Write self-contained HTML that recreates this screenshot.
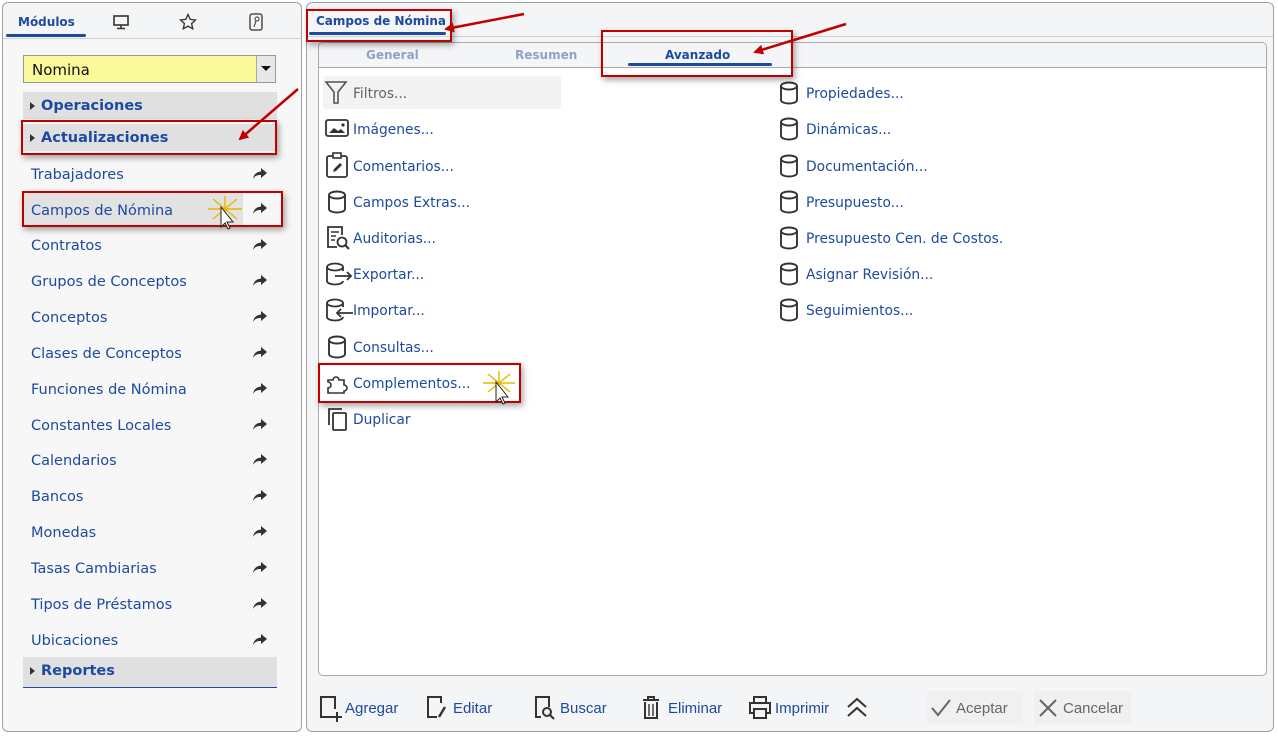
<!DOCTYPE html>
<html><head><meta charset="utf-8"><style>
*{box-sizing:border-box;margin:0;padding:0}
body{width:1278px;height:736px;background:#fff;position:relative;overflow:hidden;font-family:"DejaVu Sans","Liberation Sans",sans-serif;color:#1d4aa0}
.a{position:absolute}
.lp{left:2px;top:2px;width:300px;height:730px;border:1px solid #a0a0a0;border-radius:6px;background:#f7f7f7}
.rp{left:306px;top:2px;width:968px;height:730px;border:1px solid #a0a0a0;border-radius:6px;background:#f4f5f7}
.li{left:31px;font-size:14.5px;white-space:nowrap;margin-top:2px}
.sh{left:23px;width:254px;background:#e0e0e0;font-weight:bold;font-size:14.5px;padding-left:18px;line-height:29px;height:27px}
.sh:before{content:"";position:absolute;left:7px;top:10px;border-left:5px solid #333;border-top:4px solid transparent;border-bottom:4px solid transparent}
.ar{left:252px;width:16px;height:14px}
.it{font-size:13.8px;white-space:nowrap;margin-top:2px}
.ic{width:20px;height:24px}
.tb{font-family:"Liberation Sans",sans-serif;font-size:15px;top:700px;white-space:nowrap}
</style></head><body>
<svg width="0" height="0" style="position:absolute"><defs>
<symbol id="cyl" viewBox="0 0 20 24"><g fill="none" stroke="#333" stroke-width="1.9"><ellipse cx="10" cy="5" rx="8" ry="3.5"/><path d="M2 5v14c0 2 3.6 3.5 8 3.5s8-1.5 8-3.5V5"/></g></symbol>
<symbol id="fwd" viewBox="0 0 16 14"><path d="M9 1l6 5-6 5V8C5 8 2.5 9 1 12c0.5-4 3-7 8-7.5z" fill="#333"/></symbol>
</defs></svg>

<div class="a lp">
 <div class="a" style="left:0;top:0;width:298px;height:36px;border-bottom:1px solid #d0d0d0;background:#f4f5f7;border-radius:6px 6px 0 0"></div>
 <div class="a" style="left:15px;top:12px;font-size:12px;font-weight:bold">Módulos</div>
 <div class="a" style="left:3px;top:31px;width:80px;height:3px;background:#1d4aa0;border-radius:2px"></div>
 <svg class="a" style="left:110px;top:12px" width="16" height="15"><rect x="1" y="1" width="14" height="9" fill="none" stroke="#333" stroke-width="1.6"/><path d="M8 10v3M4 13.5h8" stroke="#333" stroke-width="1.6"/></svg>
 <svg class="a" style="left:176px;top:10px" width="18" height="18" viewBox="0 0 24 24"><path d="M12 2l3 6.5 7 .8-5.2 4.8 1.5 7L12 17.5 5.7 21l1.5-7L2 9.3l7-.8z" fill="none" stroke="#333" stroke-width="1.8"/></svg>
 <svg class="a" style="left:246px;top:10px" width="14" height="18"><rect x="1" y="1" width="12" height="16" rx="2" fill="none" stroke="#333" stroke-width="1.3"/><circle cx="8" cy="6" r="2" fill="none" stroke="#333"/><path d="M7 8l-2 6" stroke="#333"/></svg>
</div>
<div class="a" style="left:23px;top:55px;width:253px;height:28px;background:#fafa9a;border:1px solid #999;font-size:15px;padding:5px 0 0 8px;color:#111">Nomina</div>
<div class="a" style="left:256px;top:56px;width:19px;height:26px;background:#e8e8e8;border-left:1px solid #aaa"></div>
<div class="a" style="left:261px;top:66px;border-top:5px solid #111;border-left:5px solid transparent;border-right:5px solid transparent"></div>

<div class="a sh" style="top:92px">Operaciones</div>
<div class="a sh" style="top:124px">Actualizaciones</div>
<div class="a" style="left:23px;top:193px;width:220px;height:32px;background:#e2e2e2"></div>
<div class="a li" style="top:165px">Trabajadores</div>
<div class="a li" style="top:201px">Campos de Nómina</div>
<div class="a li" style="top:236px">Contratos</div>
<div class="a li" style="top:272px">Grupos de Conceptos</div>
<div class="a li" style="top:308px">Conceptos</div>
<div class="a li" style="top:344px">Clases de Conceptos</div>
<div class="a li" style="top:380px">Funciones de Nómina</div>
<div class="a li" style="top:416px">Constantes Locales</div>
<div class="a li" style="top:451px">Calendarios</div>
<div class="a li" style="top:487px">Bancos</div>
<div class="a li" style="top:523px">Monedas</div>
<div class="a li" style="top:559px">Tasas Cambiarias</div>
<div class="a li" style="top:595px">Tipos de Préstamos</div>
<div class="a li" style="top:631px">Ubicaciones</div>
<svg class="a ar" style="top:167px"><use href="#fwd"/></svg>
<svg class="a ar" style="top:202px"><use href="#fwd"/></svg>
<svg class="a ar" style="top:238px"><use href="#fwd"/></svg>
<svg class="a ar" style="top:274px"><use href="#fwd"/></svg>
<svg class="a ar" style="top:310px"><use href="#fwd"/></svg>
<svg class="a ar" style="top:346px"><use href="#fwd"/></svg>
<svg class="a ar" style="top:382px"><use href="#fwd"/></svg>
<svg class="a ar" style="top:418px"><use href="#fwd"/></svg>
<svg class="a ar" style="top:453px"><use href="#fwd"/></svg>
<svg class="a ar" style="top:489px"><use href="#fwd"/></svg>
<svg class="a ar" style="top:525px"><use href="#fwd"/></svg>
<svg class="a ar" style="top:561px"><use href="#fwd"/></svg>
<svg class="a ar" style="top:597px"><use href="#fwd"/></svg>
<svg class="a ar" style="top:633px"><use href="#fwd"/></svg>
<div class="a sh" style="top:657px;height:31px;border-bottom:1.5px solid #1d4aa0">Reportes</div>

<div class="a rp"></div>
<div class="a" style="left:307px;top:36px;width:966px;height:1px;background:#d0d0d0"></div>
<div class="a" style="left:316px;top:14px;font-size:12px;font-weight:bold">Campos de Nómina</div>
<div class="a" style="left:309px;top:32px;width:137px;height:3px;background:#1d4aa0;border-radius:2px"></div>
<div class="a" style="left:318px;top:42px;width:949px;height:634px;border:1px solid #aaa;border-radius:5px;background:#fff"></div>
<div class="a" style="left:319px;top:43px;width:947px;height:25px;background:#f4f5f7;border-bottom:1px solid #aaa;border-radius:5px 5px 0 0"></div>
<div class="a" style="left:366px;top:48px;font-size:12px;font-weight:bold;color:#8fa3c8">General</div>
<div class="a" style="left:515px;top:48px;font-size:12px;font-weight:bold;color:#8fa3c8">Resumen</div>
<div class="a" style="left:665px;top:48px;font-size:12px;font-weight:bold">Avanzado</div>
<div class="a" style="left:628px;top:63px;width:144px;height:3px;background:#1d4aa0;border-radius:2px"></div>

<div class="a" style="left:323px;top:76px;width:238px;height:33px;background:#f3f3f3;border-radius:3px"></div>
<svg class="a" style="left:324px;top:80px" width="24" height="26"><path d="M2 2h20l-8 10v11h-4V12z" fill="none" stroke="#555" stroke-width="1.6"/></svg>
<div class="a it" style="left:353px;top:84px;color:#666">Filtros...</div>
<svg class="a" style="left:325px;top:119px" width="24" height="20"><rect x="1" y="1" width="22" height="16" rx="2" fill="none" stroke="#333" stroke-width="1.8"/><path d="M4 14l5-5 4 3 3-2 4 4z" fill="#333"/><circle cx="18" cy="6" r="1.6" fill="#333"/></svg>
<div class="a it" style="left:353px;top:120px">Imágenes...</div>
<svg class="a" style="left:326px;top:152px" width="22" height="26"><rect x="1" y="4" width="20" height="21" rx="2" fill="none" stroke="#333" stroke-width="1.8"/><rect x="7" y="1" width="8" height="5" fill="#fff" stroke="#333" stroke-width="1.6"/><path d="M7 20l1-3 6-6 2 2-6 6z" fill="#333"/></svg>
<div class="a it" style="left:353px;top:157px">Comentarios...</div>
<svg class="a ic" style="left:327px;top:190px"><use href="#cyl"/></svg>
<div class="a it" style="left:353px;top:193px">Campos Extras...</div>
<svg class="a" style="left:325px;top:225px" width="26" height="26"><path d="M12 22H3V2h14v8" fill="none" stroke="#333" stroke-width="1.8"/><path d="M6 7h8M6 11h5M6 15h4" stroke="#333" stroke-width="1.5"/><circle cx="17" cy="17" r="4.5" fill="none" stroke="#333" stroke-width="1.8"/><path d="M20 20l4 4" stroke="#333" stroke-width="2"/></svg>
<div class="a it" style="left:353px;top:229px">Auditorias...</div>
<svg class="a" style="left:325px;top:262px" width="28" height="25"><g fill="none" stroke="#333" stroke-width="1.8"><ellipse cx="10" cy="5" rx="8" ry="3.5"/><path d="M2 5v14c0 2 3.5 3.5 8 3.5s8-1.5 8-3.5M18 5v4"/><path d="M10 14h16M22 10l4 4-4 4"/></g></svg>
<div class="a it" style="left:353px;top:265px">Exportar...</div>
<svg class="a" style="left:325px;top:298px" width="28" height="25"><g fill="none" stroke="#333" stroke-width="1.8"><ellipse cx="10" cy="5" rx="8" ry="3.5"/><path d="M2 5v14c0 2 3.5 3.5 8 3.5s8-1.5 8-3.5M18 5v4"/><path d="M12 15h16M16 11l-4 4 4 4"/></g></svg>
<div class="a it" style="left:353px;top:301px">Importar...</div>
<svg class="a ic" style="left:327px;top:335px"><use href="#cyl"/></svg>
<div class="a it" style="left:353px;top:338px">Consultas...</div>
<div class="a" style="left:318px;top:363px;width:203px;height:40px;border:2px solid #c00000;box-shadow:2px 3px 6px rgba(0,0,0,.35)"></div>
<svg class="a" style="left:326px;top:372px" width="24" height="22"><path d="M2 8h5a3 3 0 1 1 6 0h5v5a3 3 0 1 1 0 6v2H2v-5a3 3 0 1 0 0-6z" fill="none" stroke="#333" stroke-width="1.6"/></svg>
<div class="a it" style="left:353px;top:374px">Complementos...</div>
<svg class="a" style="left:325px;top:407px" width="24" height="24"><path d="M17 2H4v16" fill="none" stroke="#333" stroke-width="1.8"/><rect x="8" y="6" width="13" height="17" rx="1" fill="none" stroke="#333" stroke-width="1.8"/></svg>
<div class="a it" style="left:353px;top:410px">Duplicar</div>

<svg class="a ic" style="left:779px;top:81px"><use href="#cyl"/></svg><div class="a it" style="left:806px;top:84px">Propiedades...</div>
<svg class="a ic" style="left:779px;top:117px"><use href="#cyl"/></svg><div class="a it" style="left:806px;top:120px">Dinámicas...</div>
<svg class="a ic" style="left:779px;top:154px"><use href="#cyl"/></svg><div class="a it" style="left:806px;top:157px">Documentación...</div>
<svg class="a ic" style="left:779px;top:190px"><use href="#cyl"/></svg><div class="a it" style="left:806px;top:193px">Presupuesto...</div>
<svg class="a ic" style="left:779px;top:226px"><use href="#cyl"/></svg><div class="a it" style="left:806px;top:229px">Presupuesto Cen. de Costos.</div>
<svg class="a ic" style="left:779px;top:262px"><use href="#cyl"/></svg><div class="a it" style="left:806px;top:265px">Asignar Revisión...</div>
<svg class="a ic" style="left:779px;top:298px"><use href="#cyl"/></svg><div class="a it" style="left:806px;top:301px">Seguimientos...</div>

<svg class="a" style="left:318px;top:695px" width="26" height="28"><path d="M14 22H3V2h14v12" fill="none" stroke="#333" stroke-width="2"/><path d="M19 17v10M14 22h10" stroke="#333" stroke-width="2"/></svg>
<div class="a tb" style="left:345px">Agregar</div>
<svg class="a" style="left:425px;top:695px" width="24" height="26"><path d="M12 22H3V2h13v6" fill="none" stroke="#333" stroke-width="2"/><path d="M14 22l6-10" stroke="#333" stroke-width="2.4"/></svg>
<div class="a tb" style="left:453px">Editar</div>
<svg class="a" style="left:533px;top:695px" width="24" height="26"><path d="M8 22H3V2h13v10" fill="none" stroke="#333" stroke-width="2"/><circle cx="14" cy="17" r="4" fill="none" stroke="#333" stroke-width="2"/><path d="M17 20l4 4" stroke="#333" stroke-width="2"/></svg>
<div class="a tb" style="left:560px">Buscar</div>
<svg class="a" style="left:640px;top:695px" width="22" height="26"><path d="M3 5h16M8 5V2h6v3M5 7v16h12V7" fill="none" stroke="#333" stroke-width="2"/><path d="M9 9v12M13 9v12" stroke="#333" stroke-width="1.4"/></svg>
<div class="a tb" style="left:668px">Eliminar</div>
<svg class="a" style="left:748px;top:695px" width="24" height="26"><path d="M6 8V2h12v6M6 18H2V8h20v10h-4M6 14h12v9H6z" fill="none" stroke="#333" stroke-width="2"/></svg>
<div class="a tb" style="left:775px">Imprimir</div>
<svg class="a" style="left:845px;top:697px" width="24" height="22"><path d="M3 10l9-8 9 8M3 19l9-8 9 8" fill="none" stroke="#333" stroke-width="2"/></svg>
<div class="a" style="left:927px;top:691px;width:96px;height:33px;background:#f0f0f0"></div>
<div class="a" style="left:1034px;top:691px;width:97px;height:33px;background:#f0f0f0"></div>
<svg class="a" style="left:930px;top:698px" width="22" height="20"><path d="M2 10l6 7L20 2" fill="none" stroke="#666" stroke-width="2"/></svg>
<div class="a tb" style="left:956px;color:#666">Aceptar</div>
<svg class="a" style="left:1038px;top:698px" width="20" height="20"><path d="M2 2l16 16M18 2L2 18" stroke="#666" stroke-width="2"/></svg>
<div class="a tb" style="left:1063px;color:#666">Cancelar</div>

<!-- annotations -->
<div class="a" style="left:21px;top:120px;width:256px;height:35px;border:2px solid #c00000;box-shadow:2px 3px 6px rgba(0,0,0,.35)"></div>
<div class="a" style="left:22px;top:191px;width:261px;height:36px;border:2px solid #c00000;box-shadow:2px 3px 6px rgba(0,0,0,.35)"></div>
<div class="a" style="left:306px;top:9px;width:146px;height:33px;border:2px solid #c00000;box-shadow:2px 3px 6px rgba(0,0,0,.35)"></div>
<div class="a" style="left:601px;top:30px;width:192px;height:47px;border:2px solid #c00000;box-shadow:2px 3px 6px rgba(0,0,0,.35)"></div>
<svg class="a" style="left:0;top:0" width="1278" height="736">
<defs><marker id="m" markerWidth="10" markerHeight="10" refX="8" refY="5" orient="auto" markerUnits="userSpaceOnUse"><path d="M0 0L10 5 0 10z" fill="#c00000"/></marker></defs>
<g stroke="#c00000" stroke-width="2.5" fill="none" marker-end="url(#m)">
<path d="M298 89L240 139"/><path d="M524 14L446 29"/><path d="M846 24L755 52"/></g>
<g stroke="#e6b800" stroke-width="1.4"><path d="M208 209h34M225 196v26M213 199l24 20M237 199l-24 20"/><path d="M483 383h32M499 371v26M488 374l22 18M510 374l-22 18"/></g>
<path d="M221 207v20l4-4 3 6 2-1-3-6h6z" fill="#fff" stroke="#222"/>
<path d="M496 382v20l4-4 3 6 2-1-3-6h6z" fill="#fff" stroke="#222"/>
</svg>
</body></html>
